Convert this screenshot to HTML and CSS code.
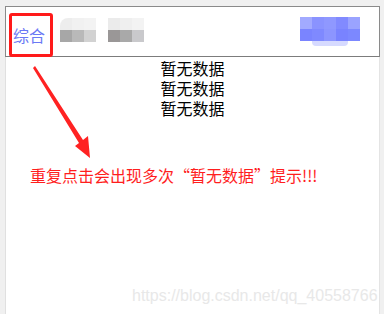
FILE: index.html
```html
<!DOCTYPE html>
<html lang="zh-CN">
<head>
  <meta charset="UTF-8">
  <title>暂无数据</title>
  <link rel="stylesheet" href="styles.css">
</head>
<body>
  <div class="panel">
    <div class="tabs">
      <div class="tab active">综合</div>
      <div class="mosaic gray-a">
        <div class="row top"></div>
        <div class="row bottom"></div>
      </div>
      <div class="mosaic gray-b">
        <div class="row top"></div>
        <div class="row bottom"></div>
      </div>
      <div class="mosaic blue">
        <div class="row top"></div>
        <div class="row bottom"></div>
        <div class="halo"></div>
      </div>
    </div>

    <div class="content">
      <p class="empty">暂无数据</p>
      <p class="empty">暂无数据</p>
      <p class="empty">暂无数据</p>
      <p class="note">重复点击会出现多次“暂无数据”提示!!!</p>
    </div>

    <!-- 标注箭头 -->
    <svg class="arrow" width="70" height="100" viewBox="0 0 70 100">
      <polygon points="0,2 2,0 50,74 55,70 57,92 42,80 46,77" fill="#ff2222"/>
    </svg>

    <div class="watermark">https://blog.csdn.net/qq_40558766</div>
  </div>
</body>
</html>
```

FILE: styles.css
```css
body {
  margin: 0;
  background-color: #f0f0f0;
  font-family: "Noto Sans CJK SC", "Microsoft YaHei", sans-serif;
}

.panel {
  position: relative;
  margin: 6px 0 0 5px;
  width: 375px;
  height: 308px;
  background-color: #fff;
  border-left: 1px solid #e0e0e0;
  border-right: 1px solid #e4e4e4;
  box-sizing: border-box;
}

.tabs {
  display: flex;
  align-items: flex-start;
  height: 51px;
  margin: 0 -1px;
  border: 1px solid #8a8a8a;
  border-bottom-color: #7c7c7c;
  padding-left: 3px;
  box-sizing: border-box;
}

.tab {
  margin-top: 6px;
  width: 44px;
  height: 44px;
  box-sizing: border-box;
  border: 3px solid #ff1a1a;
  border-radius: 3px;
  color: #6b79f5;
  font-size: 16px;
  line-height: 38px;
  padding-left: 1px;
  margin-bottom: -1px;
}

.mosaic {
  position: relative;
  margin-top: 11px;
  width: 36px;
}

.mosaic .row {
  height: 12px;
}

.gray-a { margin-left: 7px; }
.gray-b { margin-left: 12px; }

.gray-a .top {
  border-radius: 8px 0 0 0;
  background: linear-gradient(to right, #ededed 0 12px, #f1f1f1 12px 24px, #f3f3f3 24px);
}
.gray-a .bottom {
  background: linear-gradient(to right, #a7a7a7 0 12px, #b9b9b9 12px 24px, #d2d2d2 24px);
}

.gray-b .top {
  background: linear-gradient(to right, #ebebeb 0 12px, #efefef 12px 24px, #f3f3f3 24px);
}
.gray-b .bottom {
  background: linear-gradient(to right, #9a9797 0 12px, #a9a9a9 12px 24px, #c9c9cc 24px);
}

.blue {
  width: 60px;
  margin-left: auto;
  margin-right: 19px;
  margin-top: 10px;
}

.blue .top {
  background: linear-gradient(to right, #a2aaff 0 12px, #8a93ff 12px 24px, #8f98ff 24px 36px, #818aff 36px 48px, #9aa3ff 48px);
}
.blue .bottom {
  background: linear-gradient(to right, #7a84ff 0 12px, #7f89ff 12px 24px, #8c95ff 24px 36px, #7983ff 36px 48px, #7c88ff 48px);
}
.blue .halo {
  margin-left: 12px;
  width: 36px;
  height: 5px;
  background-color: #d6daff;
  border-radius: 0 0 4px 4px;
}

.content {
  padding-top: 1px;
}

.empty {
  margin: 0;
  text-align: center;
  font-size: 16px;
  line-height: 20px;
  color: #000;
}

.note {
  margin: 47px 0 0 24px;
  font-size: 16px;
  line-height: 20px;
  color: #ff1e1e;
}

.arrow {
  position: absolute;
  left: 27px;
  top: 60px;
}

.watermark {
  position: absolute;
  left: 126px;
  top: 281px;
  font-family: "Liberation Sans", Arial, sans-serif;
  font-size: 16px;
  color: #e8e8e8;
}
```
